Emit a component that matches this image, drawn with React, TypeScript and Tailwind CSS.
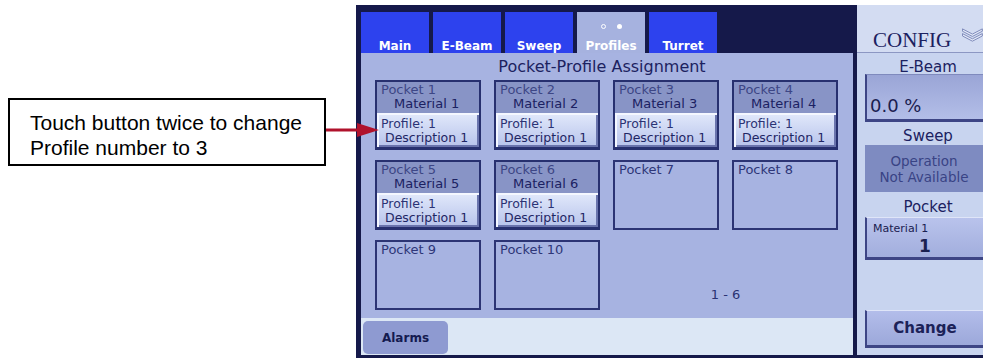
import React from 'react';

const tabs = [
  { label: 'Main' },
  { label: 'E-Beam' },
  { label: 'Sweep' },
  { label: 'Profiles', active: true },
  { label: 'Turret' },
];

function Tab({ label, active }: { label: string; active?: boolean }) {
  return (
    <div
      className={`flex w-[68px] flex-col items-center justify-end text-[12px] font-bold leading-[14px] text-white ${
        active ? 'bg-[#a6b2df]' : 'bg-[#2d42ee]'
      }`}
    >
      {active && (
        <div className="mb-[10px] flex gap-[11px]">
          <span className="h-[5px] w-[5px] rounded-full border border-white" />
          <span className="h-[5px] w-[5px] rounded-full bg-white" />
        </div>
      )}
      {label}
    </div>
  );
}

function FilledPocket({ n }: { n: number }) {
  return (
    <div className="flex h-[70px] flex-col border-2 border-b-[3px] border-[#27306f] bg-[#8894c6]">
      <div className="h-[31px] pl-[4px] pt-[1px] text-[13px] leading-[14px]">
        <p className="text-[#3d4685]">Pocket {n}</p>
        <p className="pl-[13px] text-[#1b2162]">Material {n}</p>
      </div>
      <div className="flex-1 bg-gradient-to-b from-[#e2e9fb] to-[#b7c3eb] pl-[4px] pt-[4px] text-[12.5px] leading-[14px] shadow-[inset_2px_2px_0_#f4f7ff,inset_-2px_-2px_0_#6a74ad]">
        <p className="text-[#2b3374]">Profile: 1</p>
        <p className="pl-[4px] text-[#1f2664]">Description 1</p>
      </div>
    </div>
  );
}

function EmptyPocket({ n }: { n: number }) {
  return (
    <div className="h-[70px] border-2 border-[#2c3474] pl-[4px] pt-[1px] text-[13px] leading-[14px] text-[#2e3678]">
      Pocket {n}
    </div>
  );
}

function SideLabel({ children, top }: { children: React.ReactNode; top: string }) {
  return (
    <div className={`pl-[16px] text-center text-[15px] leading-[18px] text-[#1b2160] ${top}`}>
      {children}
    </div>
  );
}

export default function App() {
  return (
    <div className="relative flex h-[358px] w-[983px] overflow-hidden bg-white">
      {/* callout */}
      <div className="w-[356px] shrink-0 pl-[8px] pt-[98px]">
        <div className="h-[68px] w-[318px] border-2 border-black pl-[20px] pt-[10px] font-['Liberation_Sans',Arial,sans-serif] text-[21px] leading-[25px] text-black">
          <p>Touch button twice to change</p>
          <p>Profile number to 3</p>
        </div>
      </div>
      <svg className="absolute left-[326px] top-[120px] z-10" width="54" height="20" viewBox="0 0 54 20">
        <line x1="0" y1="10" x2="34" y2="10" stroke="#b0122c" strokeWidth="3" />
        <polygon points="31,3 53,10 31,17" fill="#b0122c" />
      </svg>

      {/* touch screen */}
      <div className="mt-[5px] flex flex-1 bg-[#15194a] pb-[3px] font-['DejaVu_Sans',sans-serif]">
        <div className="flex w-[497px] shrink-0 flex-col pl-[5px] pt-[7px]">
          <div className="flex h-[41px] gap-[4px]">
            {tabs.map((t) => (
              <Tab key={t.label} label={t.label} active={t.active} />
            ))}
          </div>
          <div className="flex flex-1 flex-col bg-[#a7b3e1]">
            <div className="h-[27px] pr-[10px] pt-[5px] text-center text-[16px] leading-[18px] text-[#1c2260]">
              Pocket-Profile Assignment
            </div>
            <div className="grid grid-cols-[106px_106px_106px_106px] gap-x-[13px] gap-y-[10px] pl-[14px]">
              {[1, 2, 3, 4, 5, 6].map((n) => (
                <FilledPocket key={n} n={n} />
              ))}
              <EmptyPocket n={7} />
              <EmptyPocket n={8} />
              <EmptyPocket n={9} />
              <EmptyPocket n={10} />
              <div className="col-span-2 flex items-end justify-center pb-[8px] text-[13px] leading-[14px] text-[#2a3272]">
                1 - 6
              </div>
            </div>
            <div className="flex-1" />
            <div className="h-[37px] bg-[#dce7f5] pl-[2px] pt-[3px]">
              <div className="flex h-[33px] w-[85px] items-center justify-center rounded-[5px] bg-[#8e9ad1] text-[12px] font-bold text-[#141a50]">
                Alarms
              </div>
            </div>
          </div>
        </div>

        {/* right config panel */}
        <div className="ml-[4px] flex w-[126px] flex-col bg-[#c8d4ef]">
          <div className="flex h-[48px] items-start border-b border-[#8c97c3] bg-[#d3dcf2] pl-[16px] pt-[23px]">
            <span className="font-['Liberation_Serif',serif] text-[21px] leading-[24px] text-[#1b2160]">CONFIG</span>
            <svg className="ml-[11px]" width="22" height="15" viewBox="0 0 22 15">
              <polygon points="0.5,0.5 11,6 21.5,0.5 21.5,3 11,8.5 0.5,3" fill="#e3e9f8" stroke="#7b86b7" strokeWidth="1" />
              <polygon points="0.5,5.5 11,11 21.5,5.5 21.5,8 11,13.5 0.5,8" fill="#e3e9f8" stroke="#7b86b7" strokeWidth="1" />
            </svg>
          </div>
          <div className="h-[21px]">
            <SideLabel top="pt-[5px]">E-Beam</SideLabel>
          </div>
          <div className="ml-[8px] flex h-[48px] items-end border-b-[3px] border-l-2 border-t border-[#3d4585] border-t-[#7f8abd] bg-gradient-to-b from-[#9aa5d6] to-[#b3bee8] pb-[2px] pl-[3px] text-[18px] leading-[22px] text-[#1a2050]">
            0.0 %
          </div>
          <div className="h-[23px]">
            <SideLabel top="pt-[5px]">Sweep</SideLabel>
          </div>
          <div className="ml-[8px] flex h-[47px] flex-col items-center justify-center bg-[#7e8bc1] text-[13.5px] leading-[16px] text-[#394385]">
            <p>Operation</p>
            <p>Not Available</p>
          </div>
          <div className="h-[25px]">
            <SideLabel top="pt-[6px]">Pocket</SideLabel>
          </div>
          <div className="ml-[8px] h-[43px] border-b-[3px] border-l-2 border-t border-[#3d4585] border-t-[#dfe5f8] bg-gradient-to-b from-[#b9c3ec] to-[#a2aedd] pt-[3px] text-[#1a2050]">
            <p className="pl-[6px] text-[11px] leading-[15px]">Material 1</p>
            <p className="text-center text-[17px] font-bold leading-[20px]">1</p>
          </div>
          <div className="h-[50px]" />
          <div className="ml-[8px] flex h-[38px] items-center justify-center border-b-[3px] border-l-2 border-t border-[#3d4585] border-t-[#dfe5f8] bg-gradient-to-b from-[#b3bdea] to-[#9ca8da] text-[15px] font-bold text-[#1c2258]">
            Change
          </div>
          <div className="flex-1" />
        </div>
      </div>
    </div>
  );
}
